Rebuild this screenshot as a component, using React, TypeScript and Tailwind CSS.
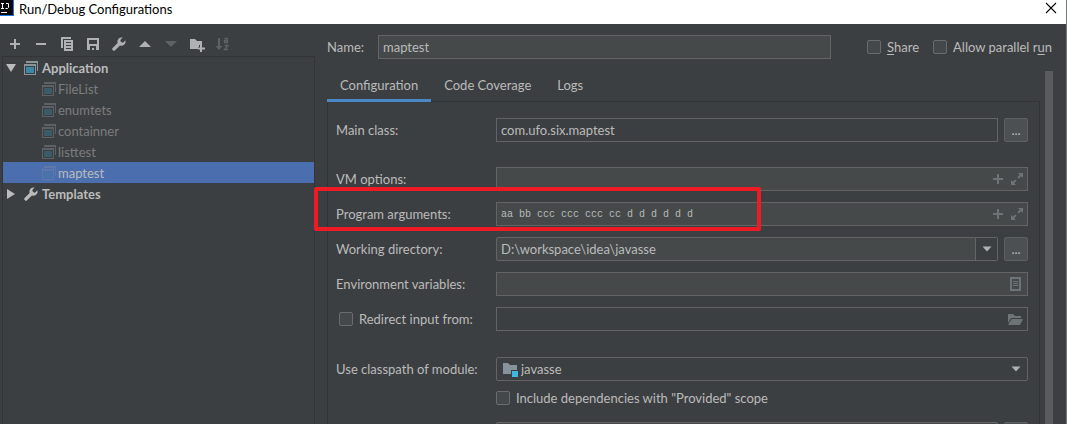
import { useState, type ReactNode } from "react";

const configurations = ["FileList", "enumtets", "containner", "listtest", "maptest"];
const tabs = ["Configuration", "Code Coverage", "Logs"];

function Icon({ children, className = "" }: { children: ReactNode; className?: string }) {
  return (
    <svg
      viewBox="0 0 16 16"
      className={`h-4 w-4 shrink-0 ${className}`}
      fill="currentColor"
      aria-hidden="true"
    >
      {children}
    </svg>
  );
}

const wrench = (
  <path d="M14.4 4.3 12 6.7 9.9 6.1 9.3 4 11.7 1.6A4.2 4.2 0 0 0 6.6 7L1.4 12.2a1.3 1.3 0 0 0 0 1.6l.8.8a1.3 1.3 0 0 0 1.6 0L9 9.4a4.2 4.2 0 0 0 5.4-5.1z" />
);

const plus = <path d="M7 3h2v4h4v2H9v4H7V9H3V7h4z" />;

const toolbar: { label: string; icon: ReactNode; disabled?: boolean }[] = [
  { label: "Add", icon: plus },
  { label: "Remove", icon: <path d="M3 7h10v2H3z" /> },
  {
    label: "Copy",
    icon: (
      <path
        fillRule="evenodd"
        d="M2 1h10v2H4v9H2zM5 4h9v11H5zM7 6v1h5V6zm0 3v1h5V9zm0 3v1h5v-1z"
      />
    ),
  },
  {
    label: "Save",
    icon: <path fillRule="evenodd" d="M2 2h12v12H2zM4 4v4h8V4zm1 6v4h2v-2h2v2h2v-4z" />,
  },
  { label: "Edit Templates", icon: wrench },
  { label: "Move Up", icon: <path d="M2 11 8 5l6 6z" /> },
  { label: "Move Down", icon: <path d="M2 5h12l-6 6z" />, disabled: true },
  {
    label: "Create Folder",
    icon: <path d="M1 3h5l2 2h5v4h-3v2H9v2H1zM11 9h2v2.500h3v2h-3V16h-2v-2.500H9v-2h2z" />,
  },
  {
    label: "Sort",
    disabled: true,
    icon: (
      <>
        <path d="M3 2h2v8h2.500L4 14 .5 10H3z" />
        <path
          d="M9.500 2.500h3v4h-3v-2h3M9.500 9.500H13l-3.500 4H13"
          fill="none"
          stroke="currentColor"
          strokeWidth="1.300"
        />
      </>
    ),
  },
];

function AppIcon({ className = "" }: { className?: string }) {
  return (
    <Icon className={className}>
      <path d="M3 1h12v10h-1V3H3z" fill="#8a959b" />
      <path fillRule="evenodd" d="M1 4h12v11H1zM2 6v8h10V6z" fill="#8a959b" />
      <path d="M3 7h8v6H3z" fill="#3e87a5" />
    </Icon>
  );
}

function Checkbox({ children }: { children: ReactNode }) {
  return (
    <label className="flex items-center gap-1.5 whitespace-nowrap">
      <input
        type="checkbox"
        className="h-3.5 w-3.5 shrink-0 appearance-none rounded-xs border border-[#6b6b6b] bg-[#43494a] checked:bg-[#4a88c7]"
      />
      <span>{children}</span>
    </label>
  );
}

function Row({ label, id, children }: { label: ReactNode; id?: string; children: ReactNode }) {
  return (
    <div className="flex h-6 items-center">
      {id ? (
        <label htmlFor={id} className="w-40 shrink-0 whitespace-nowrap">
          {label}
        </label>
      ) : (
        <div className="w-40 shrink-0 pl-[3px]">{label}</div>
      )}
      {children}
    </div>
  );
}

function Field({
  id,
  value = "",
  label,
  className = "bg-[#45494a]",
  inputClassName = "",
  children,
}: {
  id?: string;
  value?: string;
  label?: string;
  className?: string;
  inputClassName?: string;
  children?: ReactNode;
}) {
  return (
    <div className={`flex h-6 min-w-0 flex-1 items-center border border-[#646464] ${className}`}>
      <input
        id={id}
        aria-label={label}
        defaultValue={value}
        className={`h-full min-w-0 flex-1 bg-transparent px-1 outline-none ${inputClassName}`}
      />
      {children}
    </div>
  );
}

function BrowseButton({ children }: { children?: ReactNode }) {
  return (
    <button
      type="button"
      aria-label="Browse"
      className="ml-1.5 h-6 w-6 shrink-0 rounded-xs border border-[#5e6060] bg-[#4c5052] leading-5"
    >
      {children}
    </button>
  );
}

function ExpandButtons() {
  return (
    <div className="flex gap-[3px] pr-0.5 text-[#6d7477]">
      <button type="button" aria-label="Insert macro">
        <Icon>{plus}</Icon>
      </button>
      <button type="button" aria-label="Expand">
        <Icon>
          <path d="M9 2h5v5l-1.800-1.800-2.400 2.400-1.400-1.400 2.400-2.400zM2 9l1.800 1.800 2.400-2.400 1.400 1.400-2.400 2.400L7 14H2z" />
        </Icon>
      </button>
    </div>
  );
}

export default function App() {
  const [activeTab, setActiveTab] = useState("Configuration");
  const [selected, setSelected] = useState("maptest");

  return (
    <div className="flex h-screen flex-col overflow-hidden border-r border-[#77797a] bg-[#3c3f41] font-[Lato,'Open_Sans',sans-serif] text-[13px] leading-5 text-[#bbbbbb]">
      <header className="flex h-6 shrink-0 items-start justify-between bg-white pr-[9px] text-black">
        <div className="flex items-start">
          <svg viewBox="0 0 14 16" className="h-4 w-3.5" aria-hidden="true">
            <path d="M0 0h14v16H0z" fill="#1779e8" />
            <path d="M0 0h13v15H0z" fill="#090909" />
            <path
              d="M1 3.500h3M2.500 3.500v5M1 8.500h3M6 3.500h2.500v4l-1 1H5.500M1 12.500h6"
              fill="none"
              stroke="#fff"
            />
          </svg>
          <h1 className="-mt-px ml-[5px]">Run/Debug Configurations</h1>
        </div>
        <button type="button" aria-label="Close" className="pt-0.5">
          <svg viewBox="0 0 12 12" className="h-3 w-3" fill="none" stroke="currentColor">
            <path d="m1 1 10 10M11 1 1 11" strokeWidth="1.100" />
          </svg>
        </button>
      </header>

      <div className="flex min-h-0 flex-1">
        <aside className="ml-0.5 flex w-[313px] shrink-0 flex-col">
          <div className="flex h-8 shrink-0 items-end gap-2.5 pb-1 pl-[5px]">
            {toolbar.map((item) => (
              <button
                key={item.label}
                type="button"
                aria-label={item.label}
                disabled={item.disabled}
                className="text-[#afb1b3] disabled:text-[#5f6264]"
              >
                <Icon>{item.icon}</Icon>
              </button>
            ))}
          </div>

          <div className="flex-1 border border-b-0 border-[#323435]">
            <button type="button" className="flex h-[21px] w-full items-center font-bold">
              <Icon>
                <path d="M3 4h10L8 12z" />
              </Icon>
              <AppIcon className="ml-1 mr-[3px]" />
              Application
            </button>
            {configurations.map((name) => (
              <button
                key={name}
                type="button"
                onClick={() => setSelected(name)}
                className={`flex h-[21px] w-full items-center pl-[38px] ${
                  selected === name ? "bg-[#4b6eaf]" : "text-[#7b7d7e]"
                }`}
              >
                <AppIcon
                  className={`mr-px ${selected === name ? "opacity-30" : "opacity-40"}`}
                />
                {name}
              </button>
            ))}
            <button type="button" className="flex h-[21px] w-full items-center font-bold">
              <Icon>
                <path d="M4 3v10l8-5z" />
              </Icon>
              <Icon className="ml-1 mr-[3px]">{wrench}</Icon>
              Templates
            </button>
          </div>
        </aside>

        <main className="ml-3 flex min-w-0 flex-1 flex-col pr-[13px]">
          <div className="flex shrink-0 items-center pr-px pt-[11px]">
            <label htmlFor="name" className="w-[51px] shrink-0">
              Name:
            </label>
            <Field id="name" value="maptest" />
            <div className="ml-9 flex gap-3.5">
              <Checkbox>
                <u className="underline-offset-2">S</u>hare
              </Checkbox>
              <Checkbox>
                Allow parallel r<u className="underline-offset-2">u</u>n
              </Checkbox>
            </div>
          </div>

          <div className="mt-3 flex min-h-0 flex-1">
            <div className="flex min-w-0 flex-1 flex-col">
              <div className="flex h-[31px] shrink-0 border-b border-[#323435]" role="tablist">
                {tabs.map((tab) => (
                  <button
                    key={tab}
                    type="button"
                    role="tab"
                    aria-selected={activeTab === tab}
                    onClick={() => setActiveTab(tab)}
                    className={`h-[31px] border-b-3 px-[13px] ${
                      activeTab === tab ? "border-[#4a88c7]" : "border-transparent"
                    }`}
                  >
                    {tab}
                  </button>
                ))}
              </div>

              <div className="relative flex flex-1 flex-col gap-[11px] border-x border-[#323435] pl-2 pr-[11px] pt-4">
                <Row label="Main class:" id="main-class">
                  <Field id="main-class" value="com.ufo.six.maptest" className="" />
                  <BrowseButton>...</BrowseButton>
                </Row>
                <div className="mt-3.5">
                  <Row label="VM options:" id="vm-options">
                    <Field id="vm-options">
                      <ExpandButtons />
                    </Field>
                  </Row>
                </div>
                <Row label="Program arguments:" id="program-arguments">
                  <Field
                    id="program-arguments"
                    value="aa bb ccc ccc ccc cc d d d d d d"
                    inputClassName="font-['Liberation_Mono',monospace] text-[10px]"
                  >
                    <ExpandButtons />
                  </Field>
                </Row>
                <Row label="Working directory:" id="working-directory">
                  <Field
                    id="working-directory"
                    value="D:\workspace\idea\javasse"
                    className="rounded-xs bg-[#45494a]"
                  >
                    <button
                      type="button"
                      aria-label="Show history"
                      className="flex h-full w-[22px] items-center justify-center border-l border-[#646464] bg-[#3c3f41] text-[#afb1b3]"
                    >
                      <Icon>
                        <path d="M3.500 5.500h9l-4.500 5z" />
                      </Icon>
                    </button>
                  </Field>
                  <BrowseButton>...</BrowseButton>
                </Row>
                <Row label="Environment variables:" id="environment">
                  <Field id="environment">
                    <button
                      type="button"
                      aria-label="Edit environment variables"
                      className="pr-[3px] text-[#6d7477]"
                    >
                      <Icon>
                        <path
                          fillRule="evenodd"
                          d="M2 1h11v14H2zM4 3v10h7V3zM5 5h5v1H5zm0 2h5v1H5zm0 2h5v1H5z"
                        />
                      </Icon>
                    </button>
                  </Field>
                </Row>
                <Row label={<Checkbox>Redirect input from:</Checkbox>}>
                  <Field label="Input file" className="">
                    <button
                      type="button"
                      aria-label="Choose file"
                      className="pr-1 text-[#6d7477]"
                    >
                      <Icon>
                        <path d="M1 3h5l2 2h6v2H4l-3 5zM4.500 8H16l-3 6H1z" />
                      </Icon>
                    </button>
                  </Field>
                </Row>
                <div className="mt-[15px]">
                  <Row label="Use classpath of module:" id="module">
                    <div className="relative min-w-0 flex-1">
                      <select
                        id="module"
                        className="block h-6 w-full appearance-none rounded-xs border border-[#646464] bg-[#3c3f41] pl-6 outline-none"
                      >
                        <option>javasse</option>
                      </select>
                      <Icon className="pointer-events-none absolute left-1.5 top-1">
                        <path d="M1 2h5l2 2h7v5H9v4H1z" fill="#87939a" />
                        <path d="M10 10h6v6h-6z" fill="#40b6e0" />
                      </Icon>
                      <Icon className="pointer-events-none absolute right-1 top-1 text-[#afb1b3]">
                        <path d="M3.500 5.500h9l-4.500 5z" />
                      </Icon>
                    </div>
                  </Row>
                </div>
                <div className="-mt-1 pl-40">
                  <Checkbox>Include dependencies with "Provided" scope</Checkbox>
                </div>
                <div className="mt-[3px] flex pl-40">
                  <Field label="JRE" className="rounded-xs bg-[#45494a]" />
                  <BrowseButton />
                </div>

                {/* highlight around the program arguments */}
                <div className="pointer-events-none absolute -left-3.5 top-[85px] h-11 w-[447px] rounded-xs border-4 border-[#ed1c24]" />
              </div>
            </div>
            <div className="ml-[5px] w-2 shrink-0 bg-[#595b5d]" />
          </div>
        </main>
      </div>
    </div>
  );
}
